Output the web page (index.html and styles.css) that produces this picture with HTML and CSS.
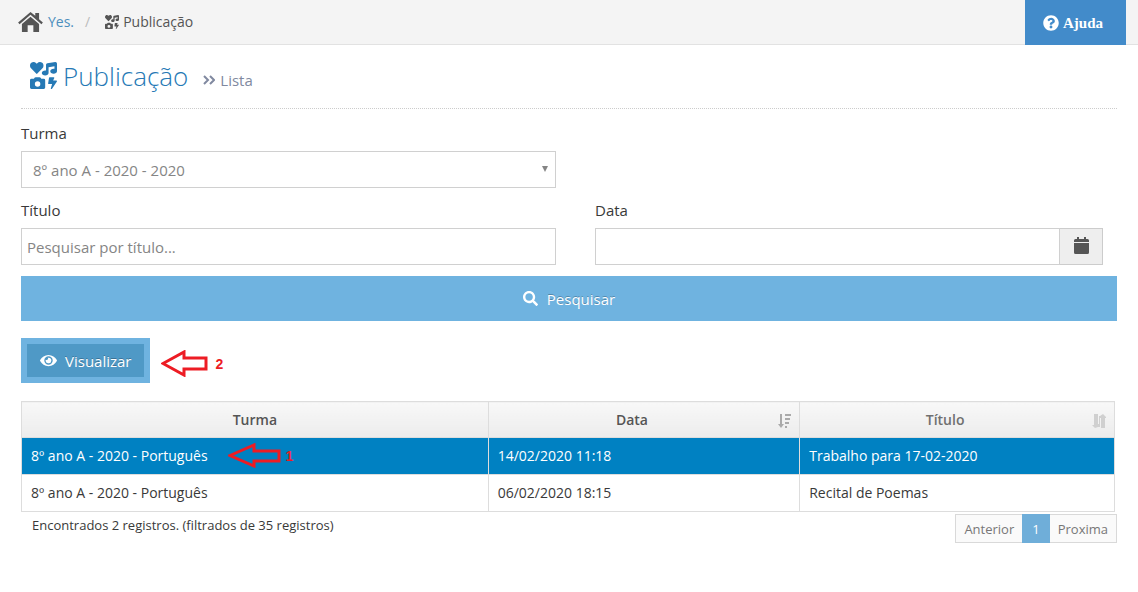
FILE: index.html
```html
<!DOCTYPE html>
<html lang="pt-BR">
<head>
<meta charset="utf-8">
<meta name="viewport" content="width=device-width, initial-scale=1">
<title>Publicação</title>
<link rel="stylesheet" href="styles.css">
</head>
<body>
<svg class="defs" aria-hidden="true">
  <symbol id="icons" viewBox="0 0 512 512"><path d="M116.65 219.35a15.68 15.68 0 0 0 22.65 0l96.75-99.83c28.15-29 26.5-77.1-4.91-103.88C203.75-7.7 163-3.5 137.86 22.44L128 32.58l-9.85-10.14C93.05-3.5 52.25-7.7 24.86 15.64c-31.41 26.78-33 74.85-5 103.88zm143.92 100.49h-48l-7.08-14.24a27.39 27.39 0 0 0-25.66-17.78h-71.71a27.39 27.39 0 0 0-25.66 17.78l-7 14.24h-48A27.45 27.45 0 0 0 0 347.3v137.25A27.44 27.44 0 0 0 27.43 512h233.14A27.45 27.45 0 0 0 288 484.55V347.3a27.45 27.45 0 0 0-27.43-27.46zM144 468a52 52 0 1 1 52-52 52 52 0 0 1-52 52zm355.4-115.9h-60.58l22.36-50.75c2.1-6.65-3.93-13.21-12.18-13.21h-75.59c-6.3 0-11.66 3.9-12.5 9.1l-16.8 106.93c-1 6.3 4.88 11.89 12.5 11.89h62.31l-24.2 83c-1.89 6.65 4.2 12.9 12.23 12.9a13.26 13.26 0 0 0 10.92-5.25l92.4-138.91c4.88-6.91-1.16-15.7-10.87-15.7zM478.08.33L329.51 23.17C314.87 25.42 304 38.92 304 54.83V161.6a83.25 83.25 0 0 0-16-1.7c-35.35 0-64 21.48-64 48s28.65 48 64 48c35.2 0 63.73-21.32 64-47.66V99.66l112-17.22v47.18a83.25 83.25 0 0 0-16-1.7c-35.35 0-64 21.48-64 48s28.65 48 64 48c35.2 0 63.73-21.32 64-47.66V32c0-19.48-16-34.42-33.92-31.67z"/></symbol>
</svg>

<header class="topbar">
  <nav class="breadcrumb" aria-label="Navegação">
    <a class="home" href="#">
      <svg class="home-icon" viewBox="0 0 26 21"><path d="M13 0L18 4V1H22V7.500L26 11L24.500 12.800L13 3L1.500 12.800L0 11Z"/><path d="M13 5L22 12.500V21H16V14H10V21H4V12.500Z"/></svg>
      <span>Yes.</span>
    </a>
    <span class="slash">/</span>
    <span class="current"><svg class="current-icon"><use href="#icons"/></svg>Publicação</span>
  </nav>
  <button class="help" type="button">
    <svg class="help-icon" viewBox="0 0 512 512"><path d="M504 256c0 136.997-111.043 248-248 248S8 392.997 8 256C8 119.083 119.043 8 256 8s248 111.083 248 248zM262.655 90c-54.497 0-89.255 22.957-116.549 63.758-3.536 5.286-2.353 12.415 2.715 16.258l34.699 26.31c5.205 3.947 12.621 3.008 16.665-2.122 17.864-22.658 30.113-35.797 57.303-35.797 20.429 0 45.698 13.148 45.698 32.958 0 14.976-12.363 22.667-32.534 33.976C247.128 238.528 216 254.941 216 296v4c0 6.627 5.373 12 12 12h56c6.627 0 12-5.373 12-12v-1.333c0-28.462 83.186-29.647 83.186-106.667 0-58.002-60.165-102-116.531-102zM256 338c-25.365 0-46 20.635-46 46 0 25.364 20.635 46 46 46s46-20.636 46-46c0-25.365-20.635-46-46-46z"/></svg>
    Ajuda
  </button>
</header>

<main class="page">
  <div class="page-header">
    <svg class="title-icon"><use href="#icons"/></svg>
    <h1 class="title">Publicação</h1>
    <span class="subtitle"><svg class="chevrons" viewBox="0 0 12 10"><path d="M1 1L5 5L1 9M7 1L11 5L7 9"/></svg>Lista</span>
  </div>

  <form class="filters">
    <div class="field field-left">
      <label for="turma">Turma</label>
      <div class="select-wrap">
        <select class="control" id="turma"><option>8º ano A - 2020 - 2020</option></select>
      </div>
    </div>
    <div class="field field-left second-row">
      <label for="titulo">Título</label>
      <input class="control" id="titulo" type="text" placeholder="Pesquisar por título...">
    </div>
    <div class="field field-right second-row">
      <label for="data">Data</label>
      <div class="date-group">
        <input class="control" id="data" type="text">
        <button class="date-button" type="button" aria-label="Abrir calendário">
          <svg class="calendar" viewBox="0 0 15 17"><path d="M3 0H5V2H10V0H12V2H13.500Q15 2 15 3.500V5H0V3.500Q0 2 1.500 2H3ZM0 6H15V15.500Q15 17 13.500 17H1.500Q0 17 0 15.500Z"/></svg>
        </button>
      </div>
    </div>
    <button class="search" type="button">
      <svg class="search-icon" viewBox="0 0 512 512"><path d="M505 442.700L405.300 343c-4.500-4.500-10.600-7-17-7H372c27.600-35.300 44-79.700 44-128C416 93.100 322.900 0 208 0S0 93.100 0 208s93.100 208 208 208c48.300 0 92.700-16.400 128-44v16.300c0 6.400 2.500 12.500 7 17l99.700 99.700c9.400 9.400 24.600 9.400 33.900 0l28.300-28.300c9.400-9.400 9.400-24.600.1-34zM208 336c-70.700 0-128-57.200-128-128 0-70.700 57.200-128 128-128 70.700 0 128 57.200 128 128 0 70.700-57.200 128-128 128z"/></svg>
      Pesquisar
    </button>
  </form>

  <div class="toolbar">
    <button class="view" type="button">
      <svg class="eye" viewBox="0 0 576 512"><path d="M572.52 241.4C518.29 135.59 410.93 64 288 64S57.68 135.64 3.48 241.41a32.35 32.35 0 0 0 0 29.190C57.71 376.41 165.07 448 288 448s230.32-71.64 284.52-177.41a32.35 32.35 0 0 0 0-29.190zM288 400a144 144 0 1 1 144-144 143.93 143.93 0 0 1-144 144zm0-240a95.31 95.31 0 0 0-25.31 3.79 47.85 47.85 0 0 1-66.9 66.9A95.78 95.78 0 1 0 288 160z"/></svg>
      Visualizar
    </button>
    <span class="note"><svg class="note-arrow" viewBox="0 0 47 27"><path d="M2 13.500L23 2V8H45V19H23V25Z"/></svg>2</span>
  </div>

  <table class="records">
    <colgroup><col class="col-turma"><col class="col-data"><col class="col-titulo"></colgroup>
    <thead>
      <tr>
        <th scope="col">Turma</th>
        <th class="sortable" scope="col">Data<svg class="sort sort-active" viewBox="0 0 14 14"><path d="M3 0H5V10H7L4 14L1 10H3ZM8 0H14V2H8ZM8 4H13V6H8ZM8 8H12V10H8ZM8 12H10V14H8Z"/></svg></th>
        <th class="sortable" scope="col">Título<svg class="sort" viewBox="0 0 14 14"><path d="M2 0H6V10H7V2H8L11 0L14 3V4H13V14H9V4H8V13H6L3 14L0 11H2Z"/></svg></th>
      </tr>
    </thead>
    <tbody>
      <tr class="selected">
        <td><span class="marked">8º ano A - 2020 - Português<span class="note note-over"><svg class="note-arrow-wide" viewBox="0 0 53 25"><path d="M2 12.500L26 2V8H51V18H26V23Z"/></svg>1</span></span></td>
        <td>14/02/2020 11:18</td>
        <td>Trabalho para 17-02-2020</td>
      </tr>
      <tr>
        <td>8º ano A - 2020 - Português</td>
        <td>06/02/2020 18:15</td>
        <td>Recital de Poemas</td>
      </tr>
    </tbody>
  </table>

  <footer class="table-footer">
    <p class="summary">Encontrados 2 registros. (filtrados de 35 registros)</p>
    <nav class="pager" aria-label="Paginação">
      <a href="#">Anterior</a><a class="active" href="#" aria-current="page">1</a><a href="#">Proxima</a>
    </nav>
  </footer>
</main>
</body>
</html>
```
FILE: styles.css
```css
* { box-sizing: border-box; }
body {
  margin: 0;
  background: #fff;
  color: #393939;
  font: 15px/20px "Open Sans", sans-serif;
}
a { text-decoration: none; }
svg { fill: currentColor; flex: none; }
.defs { display: none; }
button, input, select { font: inherit; border-radius: 0; }

.topbar {
  display: flex;
  justify-content: space-between;
  height: 45px;
  padding: 0 12px 0 18px;
  background: #f4f4f4;
  border-bottom: 1px solid #e2e2e2;
  font-size: 14px;
}
.breadcrumb { display: flex; align-items: center; }
.home { display: flex; align-items: center; gap: 5px; color: #4c8fbd; }
.home-icon { width: 25px; height: 20px; color: #555; }
.slash { margin: 0 15px 0 11px; color: #bbb; }
.current { display: flex; align-items: center; gap: 4px; color: #555; }
.current-icon { width: 14px; height: 14px; }
.help {
  display: flex;
  align-items: center;
  gap: 4px;
  height: 45px;
  padding: 0 23px 0 18px;
  border: 0;
  background: #428bca;
  color: #fff;
  font: bold 15px/20px "Liberation Serif", serif;
}
.help-icon { width: 16px; height: 16px; }

.page { padding: 0 21px 24px; }
.page-header {
  display: flex;
  align-items: center;
  height: 64px;
  padding: 0 0 2px 9px;
  border-bottom: 1px dotted #ccc;
}
.title-icon { width: 27px; height: 27px; color: #2679b5; }
.title {
  margin: 0 15px 0 6px;
  color: #2679b5;
  font-size: 26px;
  font-weight: 300;
  line-height: 32px;
}
.subtitle {
  display: flex;
  align-items: center;
  gap: 5px;
  padding-top: 8px;
  color: #8089a0;
}
.chevrons {
  width: 12px;
  height: 10px;
  fill: none;
  stroke: currentColor;
  stroke-width: 2;
}

.filters {
  display: grid;
  grid-template-columns: 1fr 1fr;
  padding-top: 14px;
}
.field label { display: block; margin-bottom: 8px; }
.field-left { grid-column: 1; padding-right: 13px; }
.field-right { grid-column: 2; padding: 0 14px 0 26px; }
.second-row { padding-top: 12px; }
.control {
  display: block;
  width: 100%;
  height: 37px;
  padding: 0 5px;
  border: 1px solid #d0d0d0;
  background: #fff;
  color: #858585;
}
.control::placeholder { color: #858585; opacity: 1; }
.select-wrap { position: relative; }
.select-wrap .control { appearance: none; padding: 0 11px; }
.select-wrap::after {
  content: "";
  position: absolute;
  top: 15px;
  right: 8px;
  border: 3px solid transparent;
  border-top: 6px solid #858585;
  border-bottom: 0;
  pointer-events: none;
}
.date-group { display: flex; }
.date-group .control { flex: 1; min-width: 0; }
.date-button {
  display: flex;
  align-items: center;
  justify-content: center;
  width: 43px;
  padding: 0 0 2px;
  border: 1px solid #ccc;
  border-left: 0;
  background: #eee;
  color: #555;
}
.calendar { width: 15px; height: 17px; }
.search {
  grid-column: 1 / -1;
  display: flex;
  align-items: center;
  justify-content: center;
  gap: 9px;
  height: 45px;
  margin-top: 11px;
  border: 0;
  background: #6fb3e0;
  color: #fff;
  text-shadow: 0 -1px 0 rgba(0, 0, 0, .25);
}
.search-icon { width: 15px; height: 15px; }

.toolbar { display: flex; align-items: center; gap: 11px; margin: 17px 0 18px; }
.view {
  display: flex;
  align-items: center;
  gap: 8px;
  height: 45px;
  padding: 0 13px;
  border: 6px solid #6fb3e0;
  background: #4f99c6;
  color: #fff;
  text-shadow: 0 -1px 0 rgba(0, 0, 0, .25);
}
.eye { width: 17px; height: 15px; }
.note {
  display: flex;
  align-items: center;
  gap: 7px;
  padding-top: 6px;
  color: #ed1c24;
  font: bold 14px/16px "Liberation Sans", sans-serif;
}
.note-arrow { width: 47px; height: 27px; }
.note-arrow-wide { width: 53px; height: 25px; }
.note path { fill: none; stroke: #ed1c24; stroke-width: 3; }
.marked { position: relative; }
.note-over { position: absolute; top: -3px; left: 100%; padding: 0 0 0 20px; gap: 5px; }

.records {
  width: calc(100% - 2px);
  border-collapse: collapse;
  table-layout: fixed;
  font-size: 14px;
}
.col-turma { width: 42.7%; }
.col-data { width: 28.5%; }
.records th, .records td { height: 37px; padding: 0 9px; border: 1px solid #ddd; }
.records th {
  position: relative;
  height: 36px;
  background: linear-gradient(#f8f8f8, #ececec);
  color: #555;
  font-weight: 600;
}
.records .sortable { padding-right: 33px; }
.records th:last-child { color: #707070; }
.sort { position: absolute; top: 12px; right: 8px; width: 14px; height: 14px; color: #d0d0d0; }
.sort-active { color: #aaa; }
.selected td { background: #0081c2; color: #fff; border-top-color: #0081c2; }

.table-footer { display: flex; justify-content: space-between; font-size: 13px; }
.summary { margin: 3px 0 0 11px; }
.pager { display: flex; margin-top: 2px; border: 1px solid #d9d9d9; background: #fafafa; }
.pager a { padding: 4px 8px 3px; color: #777; }
.pager .active { margin: -1px 0; padding: 5px 10px 4px; background: #6faed9; color: #fff; }
```
